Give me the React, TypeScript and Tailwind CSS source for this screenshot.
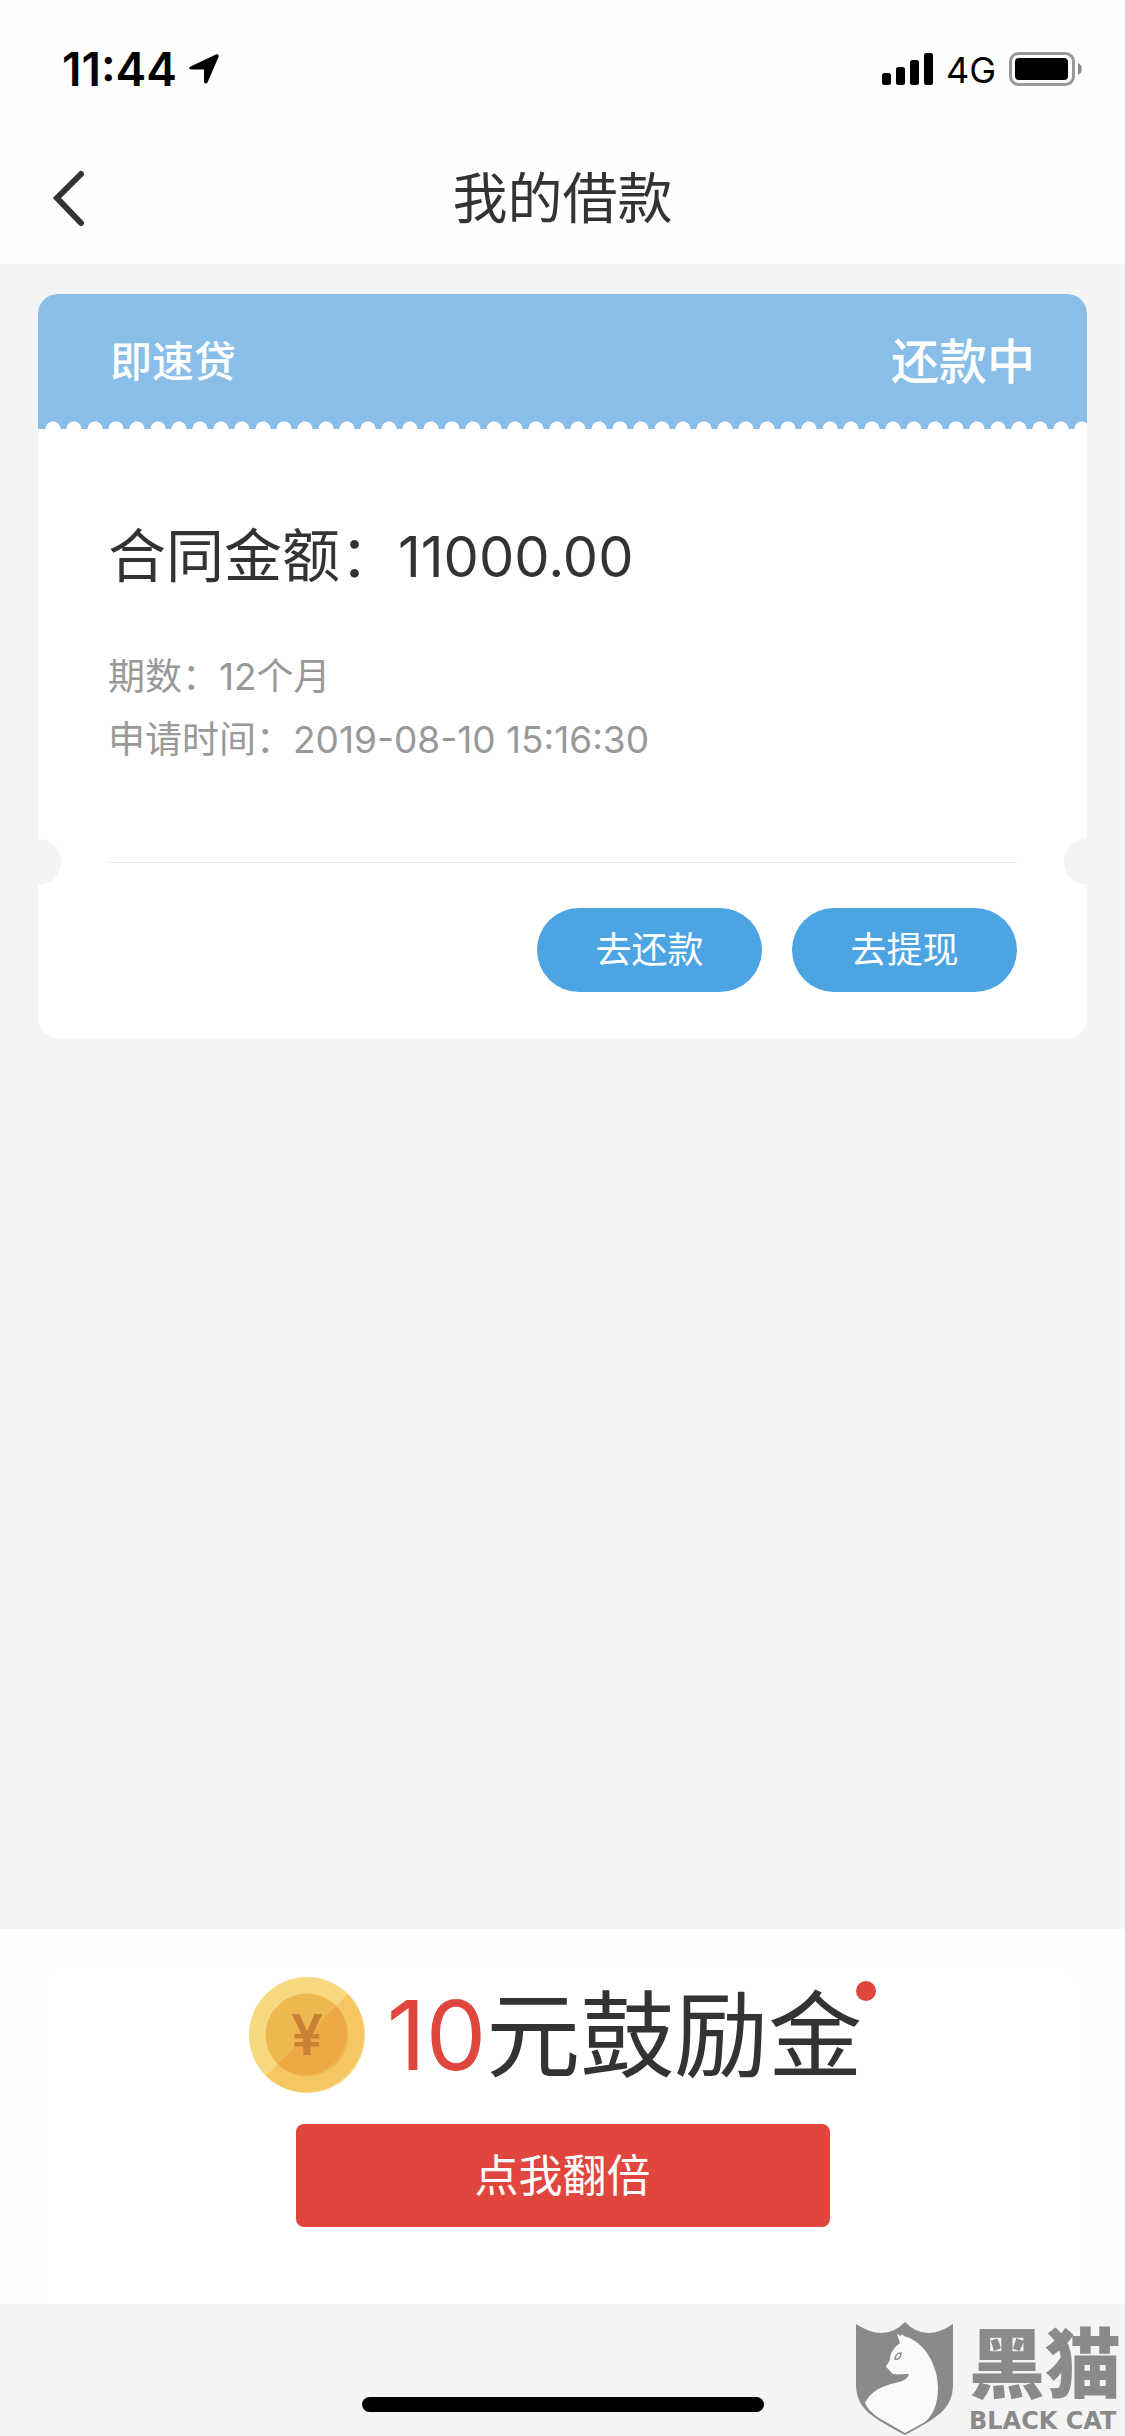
import { useState } from "react";

interface Loan {
    name: string;
    status: string;
    amount: string;
    periods: string;
    appliedAt: string;
}

const loan: Loan = {
    name: "即速贷",
    status: "还款中",
    amount: "11000.00",
    periods: "12个月",
    appliedAt: "2019-08-10 15:16:30",
};

function StatusBar() {
    return (
        <div className="flex h-[132px] items-start justify-between pt-[42px] pr-[42px] pl-[62px] text-black">
            <div className="flex h-[54px] items-center gap-3">
                <span className="text-[46px] leading-[54px] font-semibold">11:44</span>
                <svg className="h-[30px] w-[30px]" viewBox="0 0 30 30" aria-hidden="true">
                    <path d="M2 12.2 27 .6c1.700-.8 3.200.6 2.500 2.400L18.600 28.200c-.9 2.100-3.600 1.700-3.600-.6V15.400H2.500C-.2 15.400-.6 13.300 2 12.200Z" />
                </svg>
            </div>
            <div className="flex h-[54px] items-center">
                <svg className="h-8 w-[51px]" viewBox="0 0 51 32" aria-hidden="true">
                    <rect x="0" y="20" width="9" height="12" rx="2.500" />
                    <rect x="14" y="14" width="9" height="18" rx="2.500" />
                    <rect x="28" y="7" width="9" height="25" rx="2.500" />
                    <rect x="42" y="0" width="9" height="32" rx="2.500" />
                </svg>
                <span className="mx-[13px] pt-0.5 text-[36px] leading-[54px]">4G</span>
                <svg className="h-[34px] w-[74px]" viewBox="0 0 74 34" aria-hidden="true">
                    <rect x="1.500" y="1.500" width="63" height="31" rx="8" fill="none" stroke="#999" strokeWidth="3" />
                    <rect x="6" y="6" width="53" height="22" rx="4" />
                    <path d="M69 11c5 1.500 5 10.500 0 12Z" fill="#8a8a8a" />
                </svg>
            </div>
        </div>
    );
}

function NavBar() {
    return (
        <div className="grid h-[132px] grid-cols-[1fr_auto_1fr] items-center text-[#333]">
            <button className="ml-[52px] w-9 justify-self-start" aria-label="返回">
                <svg className="h-[56px] w-9" viewBox="0 0 36 56" fill="none" aria-hidden="true">
                    <path d="M29 4 5 28l24 25" stroke="currentColor" strokeWidth="6" strokeLinecap="round" />
                </svg>
            </button>
            <h1 className="text-[55px] leading-[64px]">我的借款</h1>
        </div>
    );
}

function LoanCard({ name, status, amount, periods, appliedAt }: Loan) {
    return (
        <section className="overflow-hidden rounded-[20px] bg-white">
            <div className="flex h-[127px] items-center justify-between bg-[#89bee9] pt-2 pr-[52px] pl-[72px] font-medium text-white">
                <h2 className="text-[42px]">{name}</h2>
                <span className="text-[48px]">{status}</span>
            </div>
            {/* Perforated edge */}
            <div className="h-2 bg-[#89bee9] pl-1">
                <div className="h-full bg-[radial-gradient(circle_at_11px_8px,white_7px,transparent_8px)] bg-[length:21px_8px]" />
            </div>

            <div className="px-[70px] pt-[88px]">
                <p className="text-[58px] leading-[78px] text-[#333]">
                    合同金额：<span className="text-[56px]">{amount}</span>
                </p>
                <div className="pt-[49px] text-[37px] leading-[63px] text-[#999]">
                    <p>期数：{periods}</p>
                    <p>申请时间：{appliedAt}</p>
                </div>
            </div>

            {/* Ticket notches on both ends of the divider */}
            <div className="mt-[68px] flex h-[46px] items-center justify-between">
                <div className="h-[46px] w-[23px] rounded-r-full bg-[#f4f4f4]" />
                <div className="mx-[47px] h-px flex-1 bg-[#e8e8e8]" />
                <div className="h-[46px] w-[23px] rounded-l-full bg-[#f4f4f4]" />
            </div>

            <div className="flex justify-end gap-[30px] px-[70px] pt-[23px] pb-[46px] text-[36px] text-white">
                <button className="h-[84px] w-[225px] rounded-full bg-[#4ca4e3]">去还款</button>
                <button className="h-[84px] w-[225px] rounded-full bg-[#4ca4e3]">去提现</button>
            </div>
        </section>
    );
}

function Coin() {
    return (
        <svg className="h-[116px] w-[116px]" viewBox="0 0 116 116" aria-hidden="true">
            <circle cx="58" cy="58" r="58" fill="#f8d980" />
            <path d="M99 17A58 58 0 0 1 17 99Z" fill="#f5c762" />
            <circle cx="58" cy="58" r="41.500" fill="#eeb850" />
            <path d="M87.300 28.700A41.500 41.500 0 0 1 28.700 87.300Z" fill="#eea946" />
            <text x="58" y="78" textAnchor="middle" fontSize="57" fontWeight="600" fill="#c98235">
                ¥
            </text>
        </svg>
    );
}

function PromoBanner() {
    const [hasNew, setHasNew] = useState(true);

    return (
        <section className="h-[375px] bg-[#fefefe] px-[45px] pt-8">
            <div className="flex h-full flex-col items-center rounded-t-[28px] bg-white pt-1.5">
                <div className="flex h-[136px] items-center gap-[22px] pr-[14px]">
                    <Coin />
                    <p className="relative text-[94px] leading-[136px] text-[#333]">
                        <span className="text-[96px] text-[#e0463e]">10</span>元鼓励金
                        {hasNew && <span className="absolute top-[14px] -right-[14px] h-5 w-5 rounded-full bg-[#e0463e]" />}
                    </p>
                </div>
                <button
                    onClick={() => setHasNew(false)}
                    className="mt-[21px] h-[103px] w-[534px] rounded-lg bg-[#e0463e] text-[44px] text-white"
                >
                    点我翻倍
                </button>
            </div>
        </section>
    );
}

function BlackCatMark() {
    return (
        <div className="flex gap-[15px] text-[#8b8989]">
            <svg className="h-[114px] w-[98px]" viewBox="0 0 98 114" aria-hidden="true">
                <path d="M0 2Q29 21 49 0Q69 21 97 2V62C97 88 80 96 49 113C18 96 0 88 0 62Z" fill="currentColor" />
                <path
                    d="M41 12l4 2 1-2 2 2C68 19 82 43 82 66C82 82 77 93 69 100L49 111L30 100C20 95 12 88 9 81C16 67 30 63 43 60C50 58 52 55 53 52C46 52 42 53 37 52C34 50 33 47 30 45C31 41 35 39 34 35C36 28 39 25 44 21Z"
                    fill="#fafafa"
                />
                <path d="M39 37c0-4 3-6 6-6 0 4-2 7-6 6Z" fill="none" stroke="currentColor" strokeWidth="1.500" />
            </svg>
            <div className="flex w-[156px] flex-col whitespace-nowrap">
                <span className="text-[76px] leading-[84px] font-black">黑猫</span>
                <span className="font-['DejaVu_Sans',sans-serif] text-[24px] leading-[30px] font-bold">BLACK CAT</span>
            </div>
        </div>
    );
}

export default function App() {
    return (
        <div className="relative flex min-h-screen flex-col bg-[#f4f4f4] font-[Inter,'Noto_Sans_CJK_SC',sans-serif]">
            <header className="bg-[#fefefe]">
                <StatusBar />
                <NavBar />
            </header>
            <main className="flex flex-1 flex-col justify-between">
                <div className="px-[38px] pt-[30px]">
                    <LoanCard {...loan} />
                </div>
                <PromoBanner />
            </main>
            <footer className="flex h-[132px] items-end justify-center pb-6">
                <div className="h-[15px] w-[402px] rounded-full bg-black" />
            </footer>
            <div className="absolute right-0 bottom-0">
                <BlackCatMark />
            </div>
        </div>
    );
}
